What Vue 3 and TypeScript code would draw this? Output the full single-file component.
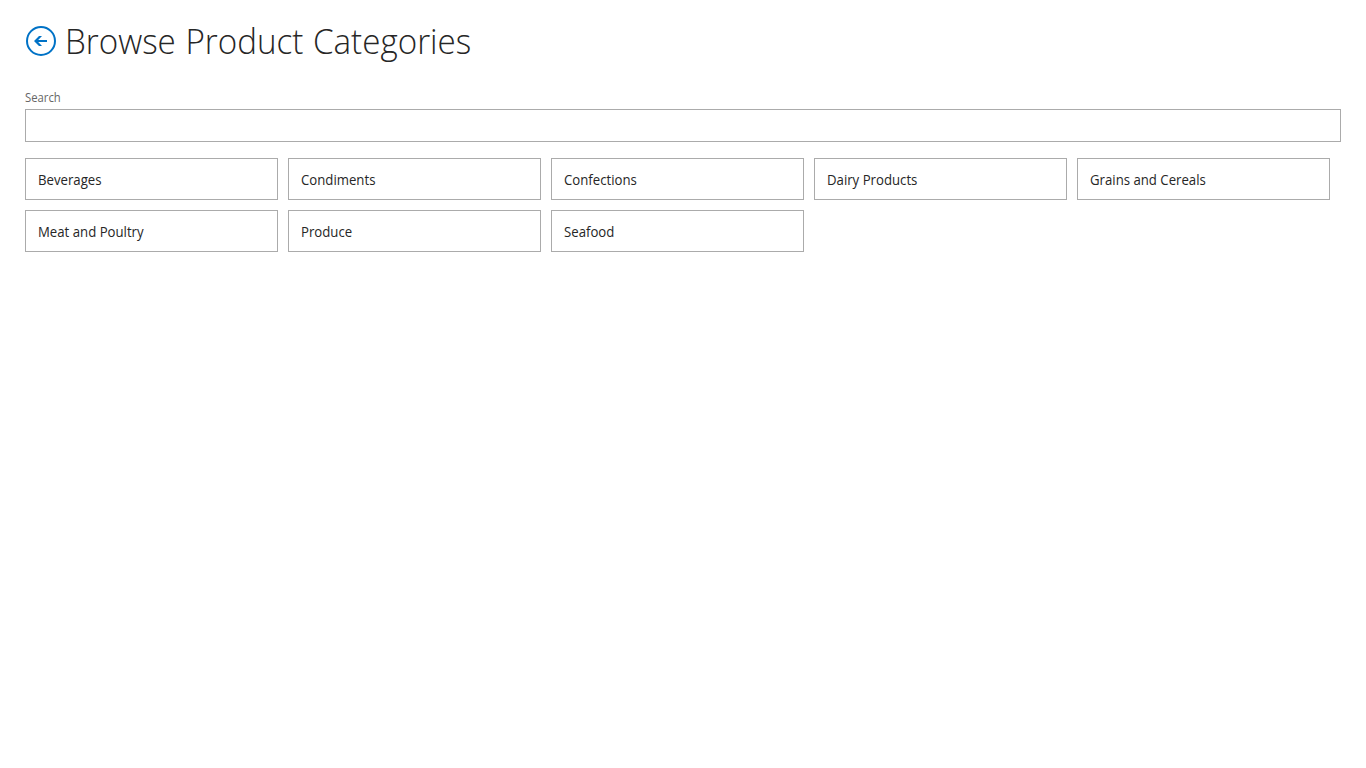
<script setup lang="ts">
import { ref } from 'vue'

const query = ref<string>('')

const categories: string[] = [
  'Beverages',
  'Condiments',
  'Confections',
  'Dairy Products',
  'Grains and Cereals',
  'Meat and Poultry',
  'Produce',
  'Seafood',
]
</script>

<template>
  <main class="screen">
    <header class="header">
      <button class="back" type="button" aria-label="Back">
        <svg width="32" height="32" viewBox="0 0 32 32" fill="none">
          <circle cx="16" cy="16" r="14" stroke="#0072c6" stroke-width="2" />
          <path d="M9 16L14 11H17L13.2 15H22V17H13.2L17 21H14Z" fill="#0072c6" />
        </svg>
      </button>
      <h1 class="title">Browse Product Categories</h1>
    </header>
    <label class="label" for="search">Search</label>
    <input id="search" v-model="query" class="search" type="text" />
    <ul class="tiles">
      <li v-for="name in categories" :key="name" class="tile"><span class="name">{{ name }}</span></li>
    </ul>
  </main>
</template>

<style>
body {
  background: #fff;
}
</style>

<style scoped>
.screen {
  box-sizing: border-box;
  min-height: 768px;
  padding: 17px 25px 0;
  font-family: 'Segoe UI', 'Open Sans', 'Noto Sans', sans-serif;
  color: #262626;
}
.header {
  display: flex;
  align-items: center;
  height: 48px;
}
.back {
  width: 32px;
  height: 32px;
  padding: 0;
  border: 0;
  background: none;
}
.back svg {
  display: block;
}
.title {
  margin: 0 0 0 8px;
  font-size: 35px;
  line-height: 48px;
  font-weight: 300;
  word-spacing: 1px;
  white-space: nowrap;
  transform: scaleX(0.948);
  transform-origin: left;
}
.label {
  display: block;
  width: max-content;
  margin-top: 25px;
  height: 19px;
  line-height: 16px;
  font-size: 12px;
  color: #666;
  transform: scaleX(0.94);
  transform-origin: left;
}
.search {
  display: block;
  box-sizing: border-box;
  width: 100%;
  height: 33px;
  padding: 0 8px;
  border: 1px solid #ababab;
  border-radius: 0;
  background: #fff;
  font: inherit;
  outline: none;
}
.tiles {
  display: flex;
  flex-wrap: wrap;
  gap: 10px;
  margin: 16px 0 0;
  padding: 0;
  list-style: none;
}
.tile {
  box-sizing: border-box;
  width: 253px;
  height: 42px;
  padding: 2px 12px 0;
  border: 1px solid #ababab;
  font-size: 14px;
  line-height: 38px;
  white-space: nowrap;
}
.name {
  display: inline-block;
  transform: scaleX(0.942);
  transform-origin: left;
}
</style>
